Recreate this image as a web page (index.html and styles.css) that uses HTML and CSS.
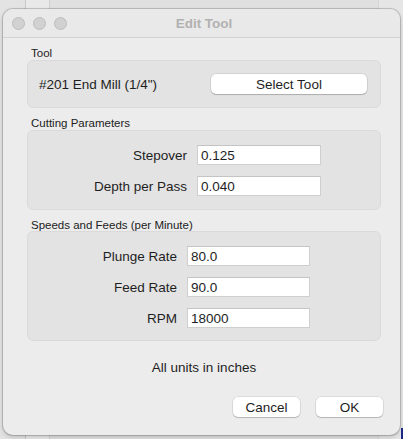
FILE: index.html
```html
<!DOCTYPE html>
<html lang="en">
<head>
  <meta charset="UTF-8">
  <meta name="viewport" content="width=device-width, initial-scale=1.0">
  <title>Edit Tool</title>
  <link rel="stylesheet" href="styles.css">
</head>
<body>
  <div class="window">
    <div class="titlebar">
      <div class="lights">
        <span class="light"></span>
        <span class="light"></span>
        <span class="light"></span>
      </div>
      <div class="title">Edit Tool</div>
      <div></div>
    </div>

    <div class="content">
      <div class="group-label">Tool</div>
      <div class="group tool-row">
        <span>#201 End Mill (1/4")</span>
        <button class="btn btn-wide">Select Tool</button>
      </div>

      <div class="group-label">Cutting Parameters</div>
      <div class="group form cutting">
        <label>Stepover</label>
        <input type="text" value="0.125">
        <label>Depth per Pass</label>
        <input type="text" value="0.040">
      </div>

      <div class="group-label">Speeds and Feeds (per Minute)</div>
      <div class="group form speeds">
        <label>Plunge Rate</label>
        <input type="text" value="80.0">
        <label>Feed Rate</label>
        <input type="text" value="90.0">
        <label>RPM</label>
        <input type="text" value="18000">
      </div>

      <div class="note">All units in inches</div>

      <div class="actions">
        <button class="btn">Cancel</button>
        <button class="btn">OK</button>
      </div>
    </div>
  </div>
</body>
</html>
```

FILE: styles.css
```css
html, body {
  margin: 0;
  height: 439px;
  overflow: hidden;
}
body {
  font-family: "Liberation Sans", Arial, sans-serif;
  font-size: 13.5px;
  color: #1e1e1e;
  box-sizing: border-box;
  padding: 9px 3px 4px 3px;
  /* window sitting behind the dialog */
  background:
    linear-gradient(#1b2a8a, #1b2a8a) 401px 428px / 2px 11px no-repeat,
    linear-gradient(#c6c6c6, #c6c6c6) 25px 0 / 1px 100% no-repeat,
    linear-gradient(#d0d0d0, #d0d0d0) 49px 0 / 1px 100% no-repeat,
    linear-gradient(#d6d6d6, #d6d6d6) 378px 0 / 1px 100% no-repeat,
    linear-gradient(90deg, #e3e3e3 25px, #e9e9e9 25px 49px, #e0e0e0 49px 378px, #e6e6e6 378px);
}

.window {
  width: 397px;
  height: 426px;
  background: #ececec;
  border-radius: 10px;
  box-shadow: 0 0 0 1px rgba(0,0,0,0.16), 0 2px 5px rgba(0,0,0,0.18);
  overflow: hidden;
}

.titlebar {
  height: 28px;
  display: grid;
  grid-template-columns: 1fr auto 1fr;
  align-items: center;
  border-bottom: 1px solid #d3d3d3;
  background: #e9e9e9;
}
.lights {
  display: flex;
  gap: 8px;
  padding-left: 9px;
  padding-top: 1px;
}
.light {
  width: 11px;
  height: 11px;
  border-radius: 50%;
  background: #d1d1d1;
  border: 0.5px solid #bcbcbc;
}
.title {
  font-weight: bold;
  font-size: 13.5px;
  color: #b1b1b1;
  padding-left: 5px;
}

.content {
  padding: 0 19px 0 24px;
}

.group-label {
  font-size: 11.5px;
  line-height: 14px;
  margin: 8px 0 0 4px;
  color: #222;
}
.group {
  background: #e3e3e3;
  border: 1px solid #dadada;
  border-radius: 6px;
  box-sizing: border-box;
}

.tool-row {
  height: 48px;
  display: flex;
  align-items: center;
  justify-content: space-between;
  padding: 0 13px 0 11px;
}

.form {
  display: grid;
  column-gap: 10px;
  row-gap: 11px;
  align-items: center;
}
.form label {
  text-align: right;
}
.cutting {
  grid-template-columns: 159px 124px;
  padding: 14px 0 13px;
}
.speeds {
  grid-template-columns: 149px 123px;
  padding: 14px 0 12px;
  margin-top: -1px;
}

input {
  height: 20px;
  box-sizing: border-box;
  border: 1px solid #cfcfcf;
  border-top-color: #c4c4c4;
  background: #fff;
  font-family: inherit;
  font-size: 13.5px;
  color: #1e1e1e;
  padding: 0 3px;
  margin: 0;
  outline: none;
}

.note {
  text-align: center;
  line-height: 16px;
  margin-top: 19px;
}

.actions {
  display: flex;
  justify-content: flex-end;
  gap: 16px;
  margin: 21px -2px 0 0;
}

.btn {
  height: 20px;
  width: 67px;
  padding: 0;
  border: none;
  border-radius: 5px;
  background: #fff;
  font-family: inherit;
  font-size: 13.5px;
  color: #1e1e1e;
  box-shadow: 0 0 0 0.5px rgba(0,0,0,0.14), 0 1px 1px rgba(0,0,0,0.18);
  cursor: pointer;
}
.btn-wide {
  width: 156px;
}
```
